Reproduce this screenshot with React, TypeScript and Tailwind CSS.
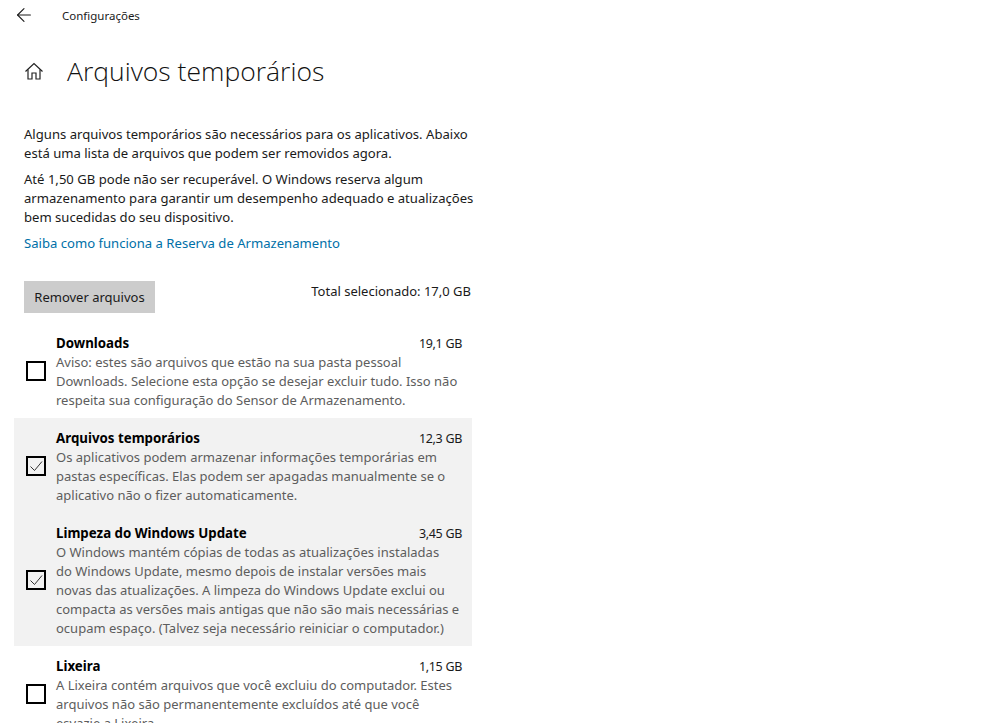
import { ArrowLeft } from "lucide-react";

const rows = [
  {
    title: "Downloads",
    size: "19,1 GB",
    checked: false,
    lines: [
      "Aviso: estes são arquivos que estão na sua pasta pessoal",
      "Downloads. Selecione esta opção se desejar excluir tudo. Isso não",
      "respeita sua configuração do Sensor de Armazenamento.",
    ],
  },
  {
    title: "Arquivos temporários",
    size: "12,3 GB",
    checked: true,
    lines: [
      "Os aplicativos podem armazenar informações temporárias em",
      "pastas específicas. Elas podem ser apagadas manualmente se o",
      "aplicativo não o fizer automaticamente.",
    ],
  },
  {
    title: "Limpeza do Windows Update",
    size: "3,45 GB",
    checked: true,
    lines: [
      "O Windows mantém cópias de todas as atualizações instaladas",
      "do Windows Update, mesmo depois de instalar versões mais",
      "novas das atualizações. A limpeza do Windows Update exclui ou",
      "compacta as versões mais antigas que não são mais necessárias e",
      "ocupam espaço. (Talvez seja necessário reiniciar o computador.)",
    ],
  },
  {
    title: "Lixeira",
    size: "1,15 GB",
    checked: false,
    lines: [
      "A Lixeira contém arquivos que você excluiu do computador. Estes",
      "arquivos não são permanentemente excluídos até que você",
      "esvazie a Lixeira.",
    ],
  },
];

function HomeIcon() {
  return (
    <svg width="20" height="20" viewBox="0 0 20 20" fill="none" stroke="#222" strokeWidth="1.2">
      <path d="M1.5 10.5 10 2.5l8.5 8" />
      <path d="M4 8.5V18h4v-6h4v6h4V8.5" />
    </svg>
  );
}

export default function App() {
  return (
    <div className="h-[723px] w-[1006px] overflow-hidden bg-white font-['Noto_Sans',sans-serif] text-[13px] leading-[19px] text-[#1a1a1a]">
      {/* Top bar */}
      <div className="flex h-[31px] items-center pl-[13px]">
        <ArrowLeft className="h-[22px] w-[22px] -translate-y-px" strokeWidth={1.2} />
        <span className="ml-[27px] text-[11.5px]">Configurações</span>
      </div>

      <div className="w-[472px] pl-[24px]">
        {/* Title */}
        <div className="mt-[21px] flex h-[38px] items-center">
          <HomeIcon />
          <h1 className="ml-[23px] font-['Open_Sans',sans-serif] text-[26.5px] font-light leading-[38px] text-[#111]">Arquivos temporários</h1>
        </div>

        <div className="whitespace-nowrap text-[13.1px]">
          <p className="mt-[35px]">
            Alguns arquivos temporários são necessários para os aplicativos. Abaixo
            <br />
            está uma lista de arquivos que podem ser removidos agora.
          </p>
          <p className="mt-[7px]">
            Até 1,50 GB pode não ser recuperável. O Windows reserva algum
            <br />
            armazenamento para garantir um desempenho adequado e atualizações
            <br />
            bem sucedidas do seu dispositivo.
          </p>
          <a className="mt-[7px] block text-[#0070a8]">Saiba como funciona a Reserva de Armazenamento</a>
        </div>

        <div className="mt-[28px] flex items-start justify-between">
          <button className="h-[32px] w-[131px] bg-[#cccccc] text-center">Remover arquivos</button>
          <span className="mt-[1px] mr-px">Total selecionado: 17,0 GB</span>
        </div>
      </div>

      {/* File list */}
      <div className="mt-[10px] ml-[14px] w-[458px]">
        {rows.map((row) => (
          <div key={row.title} className={`flex pt-[11px] pr-[10px] pb-[8px] pl-[12px] ${row.checked ? "bg-[#f2f2f2]" : ""}`}>
            <div className="flex w-[30px] shrink-0 items-center pb-[2px]">
              <span className="flex h-[20px] w-[20px] items-center justify-center border-2 border-black">
                {row.checked && (
                  <svg width="16" height="16" viewBox="0 0 16 16" fill="none" stroke="#333" strokeWidth="1">
                    <path d="M2.5 8.5 6.5 12.5 14 3.5" />
                  </svg>
                )}
              </span>
            </div>
            <div className="min-w-0 flex-1">
              <div className="flex justify-between">
                <span className="text-[13.3px] font-bold text-black">{row.title}</span>
                <span className="text-[12.5px] tracking-tight">{row.size}</span>
              </div>
              {row.lines.map((line) => (
                <div key={line} className="whitespace-nowrap text-[#5d5d5d]">
                  {line}
                </div>
              ))}
            </div>
          </div>
        ))}
      </div>
    </div>
  );
}
